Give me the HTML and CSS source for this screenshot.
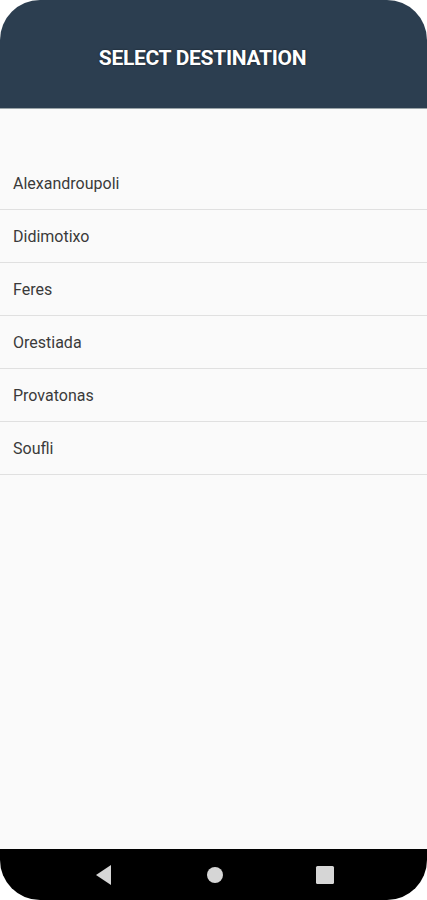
FILE: index.html
```html
<!DOCTYPE html>
<html>
<head>
<meta charset="utf-8">
<link rel="stylesheet" href="styles.css">
</head>
<body>
<div class="phone">
  <header class="header">
    <h1 class="title">SELECT DESTINATION</h1>
  </header>
  <main class="content">
    <ul class="list">
      <li class="item">Alexandroupoli</li>
      <li class="item">Didimotixo</li>
      <li class="item">Feres</li>
      <li class="item">Orestiada</li>
      <li class="item">Provatonas</li>
      <li class="item">Soufli</li>
    </ul>
  </main>
  <nav class="navbar">
    <svg class="nav-icon" width="18" height="22" viewBox="0 0 18 22"><polygon points="16,1 16,21 1,11" fill="#d6d6d6"/></svg>
    <svg class="nav-icon" width="18" height="18" viewBox="0 0 18 18"><circle cx="9" cy="9" r="8" fill="#d6d6d6"/></svg>
    <svg class="nav-icon" width="20" height="20" viewBox="0 0 20 20"><rect x="1" y="1" width="18" height="18" rx="1.5" fill="#d6d6d6"/></svg>
  </nav>
</div>
</body>
</html>
```
FILE: styles.css
```css
* { box-sizing: border-box; }
html, body { margin: 0; padding: 0; background: #ffffff; }
body { font-family: Roboto, "Liberation Sans", sans-serif; }
.phone {
  width: 427px;
  height: 900px;
  display: flex;
  flex-direction: column;
  background: #fafafa;
  border-radius: 40px;
  overflow: hidden;
}
.header {
  height: 109px;
  background: #2c3e50;
  display: flex;
  align-items: center;
  justify-content: center;
  padding-top: 8px;
  border-bottom: 1px solid #9aa4a8;
  flex-shrink: 0;
}
.title {
  margin: 0 0 0 -22px;
  color: #ffffff;
  font-size: 21px;
  font-weight: 700;
  letter-spacing: -0.3px;
  text-shadow: 0 0 2px rgba(0,0,0,0.6);
}
.content {
  flex: 1;
  padding-top: 48px;
}
.list {
  list-style: none;
  margin: 0;
  padding: 0;
}
.item {
  height: 53px;
  padding: 0 13px;
  display: flex;
  align-items: center;
  font-size: 16px;
  color: #3a3a3a;
  border-bottom: 1px solid #e0e0e0;
}
.navbar {
  height: 51px;
  background: #000000;
  display: flex;
  align-items: center;
  flex-shrink: 0;
}
.navbar svg:nth-child(1) { margin-left: 95px; }
.navbar svg:nth-child(2) { margin-left: 93px; }
.navbar svg:nth-child(3) { margin-left: 91px; }
```
